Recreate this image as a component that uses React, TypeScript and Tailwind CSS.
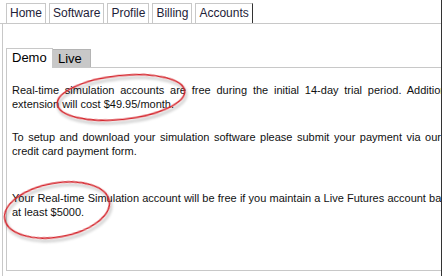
export default function App() {
  const tabs = ['Home', 'Software', 'Profile', 'Billing', 'Accounts'];

  return (
    <div className="relative h-[276px] w-[447px] overflow-hidden bg-white font-[family-name:'Liberation_Sans',Arial,sans-serif]">
      <div className="flex h-full w-[442px] flex-col overflow-hidden border-r border-[#333]">
        {/* top tabs */}
        <div className="flex shrink-0 gap-[3px] border-b border-[#c8c8c8] pl-[6px] pt-[3px]">
          {tabs.map((t) => (
            <div
              key={t}
              className={
                t === 'Accounts'
                  ? 'h-[20px] border-l border-t border-r border-[#c8c8c8] border-r-[#333] px-[3px] text-[12px] leading-[19px] text-[#1e2238]'
                  : 'h-[20px] border-l border-t border-r border-[#c8c8c8] px-[3px] text-[12px] leading-[19px] text-[#1e2238]'
              }
            >
              {t}
            </div>
          ))}
        </div>

        {/* panel */}
        <div className="ml-[2px] flex flex-1 flex-col border-l border-[#c8c8c8] pl-[3px] pt-[24px]">
          <div className="flex h-[20px] items-end border-b border-[#c8c8c8]">
            <div className="-mb-px h-[20px] w-[47px] border-l border-t border-r border-[#c8c8c8] bg-white pl-[5px] text-[13px] leading-[18px] text-black">
              Demo
            </div>
            <div className="h-[18px] w-[38px] border-t border-r border-[#b4b4b4] bg-[#c8c8c8] pl-[5px] text-[13px] leading-[17px] text-black">
              Live
            </div>
          </div>

          <div className="h-[203px] w-[520px] border-b border-l border-[#c8c8c8] pl-[5px] pt-[15px] text-[11px] leading-[14px] text-[#111]">
            <p>
              <span className="block w-[443px] text-justify [text-align-last:justify]">
                Real-time simulation accounts are free during the initial 14-day trial period. Additional
              </span>
              <span className="block">extension will cost $49.95/month.</span>
            </p>
            <p className="mt-[19px]">
              <span className="block w-[429px] text-justify [text-align-last:justify]">
                To setup and download your simulation software please submit your payment via our
              </span>
              <span className="block">credit card payment form.</span>
            </p>
            <p className="mt-[33px]">
              <span className="block w-[468px] text-justify [text-align-last:justify]">
                Your Real-time Simulation account will be free if you maintain a Live Futures account balance of
              </span>
              <span className="block">at least $5000.</span>
            </p>
          </div>
        </div>
      </div>

      {/* annotation circles */}
      <svg className="pointer-events-none absolute left-0 top-0" width="447" height="276">
        <defs>
          <filter id="sh" x="-20%" y="-30%" width="140%" height="170%">
            <feGaussianBlur in="SourceAlpha" stdDeviation="1.6" />
            <feOffset dx="1" dy="3" result="b" />
            <feComponentTransfer>
              <feFuncA type="linear" slope="0.35" />
            </feComponentTransfer>
            <feMerge>
              <feMergeNode />
              <feMergeNode in="SourceGraphic" />
            </feMerge>
          </filter>
        </defs>
        <ellipse
          cx="121"
          cy="97.5"
          rx="64"
          ry="22"
          transform="rotate(-6 121 97.5)"
          fill="none"
          stroke="#d4232a"
          strokeWidth="1.5"
          filter="url(#sh)"
        />
        <ellipse
          cx="57"
          cy="210"
          rx="53"
          ry="27"
          transform="rotate(-10 57 210)"
          fill="none"
          stroke="#d4232a"
          strokeWidth="1.5"
          filter="url(#sh)"
        />
      </svg>
    </div>
  );
}
